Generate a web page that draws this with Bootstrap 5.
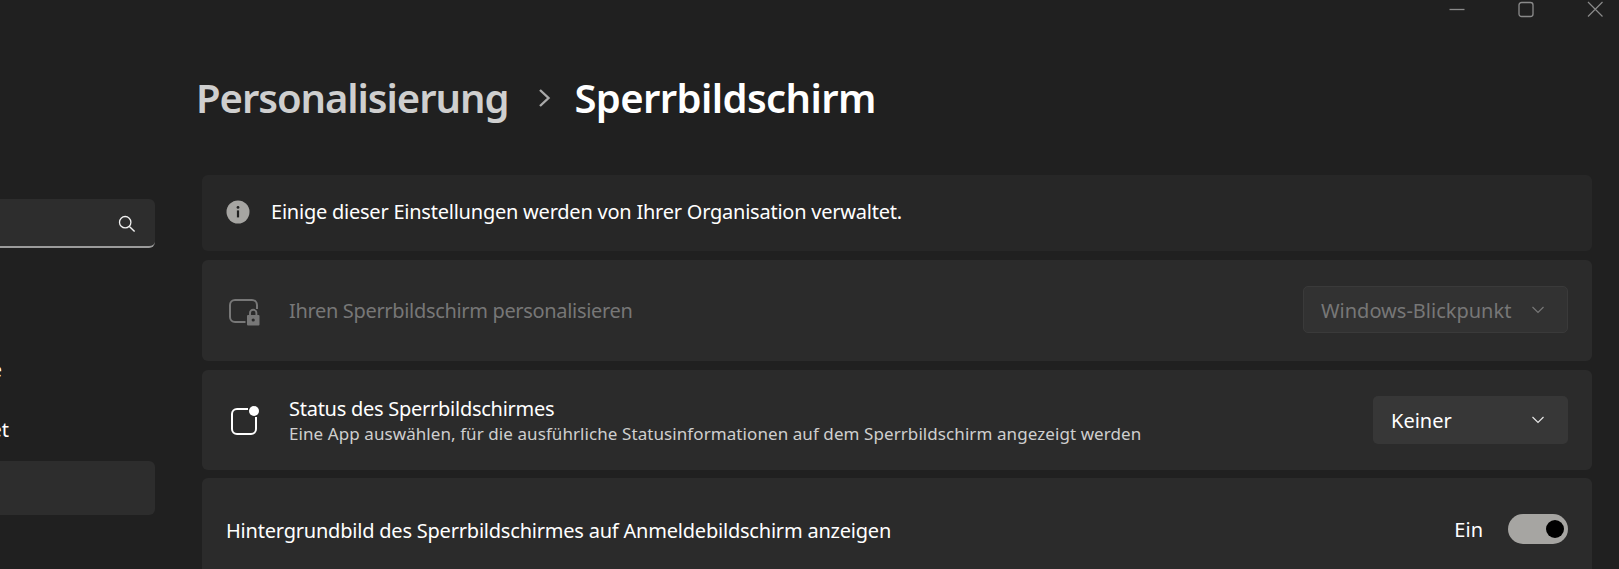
<!DOCTYPE html>
<html lang="de">
<head>
<meta charset="utf-8">
<title>Sperrbildschirm</title>
<link href="https://cdn.jsdelivr.net/npm/bootstrap@5.3.0/dist/css/bootstrap.min.css" rel="stylesheet">
<style>
html,body{height:569px;overflow:hidden;background:#202020;}
body{font-family:"Noto Sans","Open Sans",sans-serif;color:#fff;font-size:20px;line-height:1.2;}
.winbar{height:18px;padding-right:16px;gap:53px;}
.winbar svg{display:block;}
.sidepane{width:155px;flex:none;margin-right:47px;padding-top:181px;}
.findbox{height:49px;background:#2d2d2d;border-bottom:2px solid #9b9b9b;border-radius:0 6px 6px 0;padding:3px 19px 0 0;}
.navline{height:54px;justify-content:flex-end;white-space:nowrap;overflow:hidden;font-size:20px;}
.navfirst{margin-top:95px;padding-right:153px;}
.navsecond{margin-top:6px;padding-right:146px;}
.navactive{margin-top:4px;height:54px;background:#2d2d2d;border-radius:0 6px 6px 0;}
.mainpane{width:1390px;flex:none;}
.crumbs{height:157px;padding-top:50px;font-size:40px;font-weight:600;line-height:60px;letter-spacing:-.6px;align-items:flex-start;margin-left:-6px;}
.crumbparent{color:#cfcfcf;letter-spacing:-1.05px;}
.crumbsep{margin:0 23px 0 30px;display:flex;align-items:center;height:60px;}
.setcard{--bs-card-border-width:0;--bs-card-border-radius:6px;background:#2b2b2b;color:#fff;}
.setcard + .setcard{margin-top:9px;}
.infocard{height:76px;padding:0 0 2px 24px;background:#272727;}
.infotext{margin-left:21px;font-size:20px;letter-spacing:-.23px;}
.rowcard{height:100px;padding:0 24px 0 27px;}
.lockrow{height:101px;padding-bottom:2px;}
.rowicon{width:60px;flex:none;}
.lockglyph{margin-top:5px;}
.statusglyph{margin-left:2px;}
.dimtext{color:#777;font-size:20px;letter-spacing:-.33px;margin-top:3px;}
.statusblock{margin-top:2px;}
.headline{letter-spacing:-.26px;}
.subline{font-size:17px;letter-spacing:.08px;color:#cfcfcf;margin-top:3px;}
.pickbox{height:48px;border-radius:5px;background:#373737;border:0;padding:0 24px 0 18px;color:#fff;font-size:20px;}
.pickbox span{padding-top:2px;}
.pickdim{height:47px;background:#323232;border:1px solid #3a3a3a;color:#777;width:265px;padding-left:17px;padding-right:23px;}
.pickon{width:195px;}
.wallcard{height:120px;padding:0 24px 18px 24px;}
.setcard + .wallcard{margin-top:8px;}
.walltext{letter-spacing:-.21px;margin-top:3px;}
.einlabel{margin-right:25px;margin-top:1px;}
.togglepill{width:60px;height:30px;border-radius:15px;background:#a6a5a2;padding-right:4px;}
.togglepill i{display:block;width:18px;height:18px;border-radius:50%;background:#000;}
</style>
</head>
<body>
<div class="d-flex justify-content-end winbar">
  <svg width="16" height="18" viewBox="0 0 16 18"><path d="M0.5 9.5H15.5" stroke="#8a8a8a" stroke-width="1.3"/></svg>
  <svg width="16" height="18" viewBox="0 0 16 18"><rect x="1" y="2.5" width="14" height="14" rx="2.5" fill="none" stroke="#8a8a8a" stroke-width="1.3"/></svg>
  <svg width="16" height="18" viewBox="0 0 16 18"><path d="M1 2L15.5 16.5M15.5 2L1 16.5" stroke="#8a8a8a" stroke-width="1.2"/></svg>
</div>
<div class="d-flex">
  <aside class="sidepane">
    <div class="findbox d-flex align-items-center justify-content-end">
      <svg width="18" height="18" viewBox="0 0 18 18"><circle cx="7.2" cy="7.2" r="5.7" fill="none" stroke="#f0f0f0" stroke-width="1.3"/><path d="M11.4 11.4L16.6 16.6" stroke="#f0f0f0" stroke-width="1.4"/></svg>
    </div>
    <div class="navline navfirst d-flex align-items-center">Bluetooth und Geräte</div>
    <div class="navline navsecond d-flex align-items-center">Netzwerk und Internet</div>
    <div class="navactive"></div>
  </aside>
  <main class="mainpane">
    <div class="crumbs d-flex">
      <span class="crumbparent">Personalisierung</span>
      <span class="crumbsep"><svg width="13" height="20" viewBox="0 0 13 20"><path d="M2 2L10.5 10L2 18" fill="none" stroke="#aaa" stroke-width="2.4"/></svg></span>
      <span>Sperrbildschirm</span>
    </div>
    <div class="card setcard infocard flex-row align-items-center">
      <svg width="24" height="24" viewBox="0 0 24 24"><circle cx="12" cy="12" r="11.5" fill="#a6a5a2"/><circle cx="12" cy="7.4" r="1.4" fill="#202020"/><rect x="10.9" y="10.4" width="2.2" height="7" fill="#202020"/></svg>
      <span class="infotext">Einige dieser Einstellungen werden von Ihrer Organisation verwaltet.</span>
    </div>
    <div class="card setcard rowcard lockrow flex-row align-items-center">
      <div class="rowicon">
        <svg width="31" height="28" viewBox="0 0 31 28" class="d-block lockglyph"><path d="M16.5 24H6a5 5 0 0 1-5-5V7a5 5 0 0 1 5-5h17a5 5 0 0 1 5 5v4" fill="none" stroke="#777" stroke-width="2"/><rect x="18" y="17" width="12.5" height="10.5" rx="1" fill="#777"/><path d="M21 17v-2a3.2 3.2 0 0 1 6.4 0v2" fill="none" stroke="#777" stroke-width="1.9"/><circle cx="24.2" cy="22" r="1.6" fill="#2b2b2b"/></svg>
      </div>
      <span class="dimtext flex-grow-1">Ihren Sperrbildschirm personalisieren</span>
      <button type="button" class="pickbox pickdim d-flex align-items-center justify-content-between" disabled>
        <span>Windows-Blickpunkt</span>
        <svg width="12" height="8" viewBox="0 0 12 8"><path d="M.5 1L6 6.5L11.5 1" fill="none" stroke="#777" stroke-width="1.2"/></svg>
      </button>
    </div>
    <div class="card setcard rowcard flex-row align-items-center">
      <div class="rowicon">
        <svg width="29" height="29" viewBox="0 0 29 29" class="d-block statusglyph"><path d="M17 3H6a5 5 0 0 0-5 5v15a5 5 0 0 0 5 5h14a5 5 0 0 0 5-5V11" fill="none" stroke="#fff" stroke-width="2"/><circle cx="23" cy="5" r="5" fill="#fff"/></svg>
      </div>
      <div class="flex-grow-1 statusblock">
        <div class="headline">Status des Sperrbildschirmes</div>
        <div class="subline">Eine App auswählen, für die ausführliche Statusinformationen auf dem Sperrbildschirm angezeigt werden</div>
      </div>
      <button type="button" class="pickbox pickon d-flex align-items-center justify-content-between">
        <span>Keiner</span>
        <svg width="12" height="8" viewBox="0 0 12 8"><path d="M.5 1L6 6.5L11.5 1" fill="none" stroke="#e6e6e6" stroke-width="1.2"/></svg>
      </button>
    </div>
    <div class="card setcard wallcard flex-row align-items-center">
      <span class="walltext flex-grow-1">Hintergrundbild des Sperrbildschirmes auf Anmeldebildschirm anzeigen</span>
      <span class="einlabel">Ein</span>
      <div class="togglepill d-flex align-items-center justify-content-end"><i></i></div>
    </div>
  </main>
</div>
<script src="https://cdn.jsdelivr.net/npm/bootstrap@5.3.0/dist/js/bootstrap.bundle.min.js"></script>
</body>
</html>
